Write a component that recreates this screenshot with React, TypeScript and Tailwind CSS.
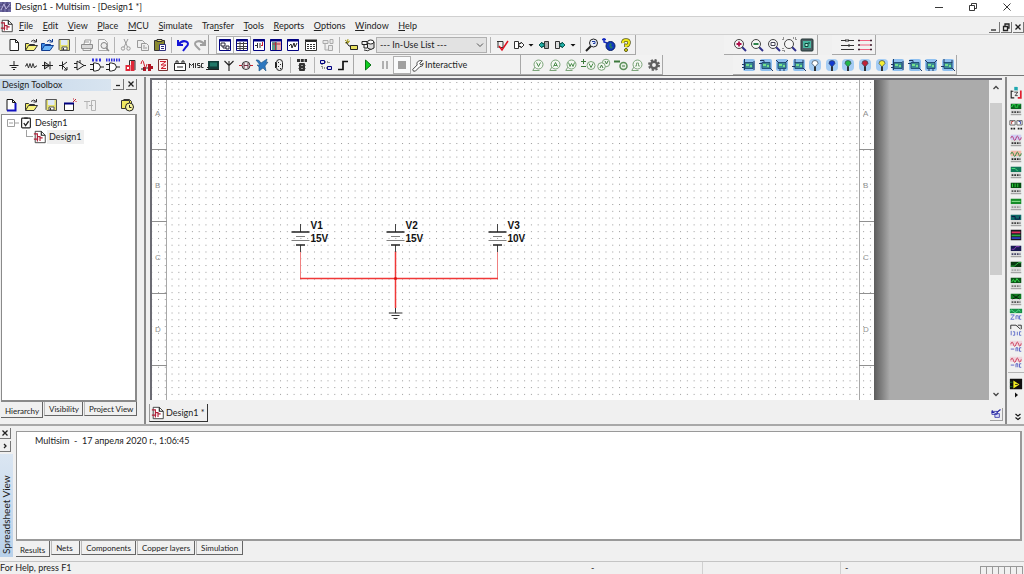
import { ReactNode } from 'react'

const NAVY = '#000080'

// 16x16 drawings, keyed by name
const docPage = (stroke: string) => (
  <>
    <path d="M4 2.500h5.500l3 3v8H4z" fill="#fff" stroke={stroke} />
    <path d="M9.500 2.500v3h3" fill="none" stroke={stroke} />
  </>
)

const folder = (back: string, front: string, line: string) => (
  <>
    <path d="M2.500 13V6.500h3l1 1h5V9" fill={back} stroke={line} />
    <path d="M2.500 13.500l3-5h9l-3.500 5z" fill={front} stroke={line} />
    <path d="M8 4.500q3-3 5 0M13.500 2v3h-3" fill="none" stroke={line} />
  </>
)

const floppy = (
  <>
    <path d="M3 2.500h10.500v11H4l-1-1z" fill="#e4e070" stroke="#555" />
    <path d="M5 3h6.500v5H5z" fill="#dfe9f6" />
    <path d="M6 10h5v3H6z" fill="#fff" stroke="#555" />
    <path d="M7 11h1v2H7z" fill="#333" />
  </>
)

const windowFrame = (inner: ReactNode) => (
  <>
    <path d="M2.500 2.500h11v11h-11z" fill="#fff" stroke={NAVY} />
    <path d="M2 3.500h12" stroke={NAVY} strokeWidth="2" />
    {inner}
  </>
)

const lens = (inner: ReactNode) => (
  <>
    <path d="M10 10l4 4" stroke="#30308c" strokeWidth="2" />
    <circle cx="7" cy="7" r="4.500" fill="#f6f6f6" stroke="#444" />
    {inner}
  </>
)

const probe = (inner: ReactNode) => (
  <>
    <path d="M2.500 13.500h7M3 13l2-3" fill="none" stroke="#7da57a" />
    <circle cx="8.500" cy="7.500" r="4.500" fill="#f3f7f2" stroke="#7da57a" />
    {inner}
  </>
)

const gate = (color: string) => (
  <>
    <path d="M1 7.500h3M1 12.500h3M11 10h4" stroke={color} />
    <path d="M4.500 6v8h2q4.500 0 5-4q-.5-4-5-4z" fill="#fff" stroke={color} />
  </>
)

const chip = (pins: string) => (
  <>
    <rect x="2" y="2" width="12" height="12" rx="2" fill="#8fc0f0" />
    <path d="M4 5.500h8v6H4z" fill="#3c8c94" stroke="#24507c" />
    <path d="M5 7h3v2H5zM9 8h2v2H9z" fill="#74e08c" />
    <path d={pins} stroke="#203860" fill="none" />
  </>
)

const pin = (color: string) => (
  <>
    <rect x="2" y="2" width="12" height="12" rx="4" fill="#a4ccf4" />
    <path d="M8 8v6" stroke="#222" strokeWidth="1.800" />
    <path d="M8 10L5 6.500q0-3 3-3t3 3z" fill={color} stroke="#345" strokeWidth=".7" />
  </>
)

const meter = (top: string, trace: string, wave: string, knobs: string) => (
  <>
    <path d="M2 2h12v12H2z" fill="#dcdcdc" />
    <path d="M2 2h12v6H2z" fill={top} />
    <path d={wave} fill="none" stroke={trace} />
    <path d="M3 11.500h2m1 0h2m1 0h2m1 0h1" stroke={knobs} strokeWidth="2" />
    <path d="M2 14.500h12" stroke="#888" />
  </>
)

const sine = 'M2 6q1.500-5 3 0t3 0 3 0 3-1'

const icons: Record<string, ReactNode> = {
  new: docPage('#222'),
  newBlue: (
    <>
      {docPage('#111')}
      <path d="M4 13.500h8.500V6" fill="none" stroke="#1010c0" strokeWidth="2" />
    </>
  ),
  open: folder('#f0ec60', '#f8f480', '#333'),
  openSample: folder('#3c8ce8', '#6ab4f8', '#103c90'),
  save: floppy,
  print: (
    <>
      <path d="M5 7l1-4h6l-1 4" fill="#fafafa" stroke="#999" />
      <path d="M2.500 7.500h11v4h-11z" fill="#d8d8d8" stroke="#8c8c8c" />
      <path d="M4 11.500h8v2H4zM6 5h4" fill="#eee" stroke="#999" />
    </>
  ),
  preview: (
    <>
      <path d="M3.500 2.500h6l3 3v8h-9z" fill="#f6f6f6" stroke="#aaa" />
      <circle cx="9" cy="8.500" r="3" fill="#eee" stroke="#888" />
      <path d="M11 11l3 3" stroke="#888" strokeWidth="1.500" />
    </>
  ),
  cut: (
    <>
      <path d="M6 2l3.500 8M10 2L6 10" stroke="#999" fill="none" />
      <circle cx="5" cy="11.500" r="1.700" fill="none" stroke="#999" />
      <circle cx="10.500" cy="11.500" r="1.700" fill="none" stroke="#999" />
    </>
  ),
  copy: (
    <>
      <path d="M2.500 3.500h5l2 2v5h-7z" fill="#eee" stroke="#999" />
      <path d="M6.500 6.500h5l2 2v5h-7zM8 9h2m-2 2h4" fill="#eee" stroke="#999" />
    </>
  ),
  paste: (
    <>
      <path d="M2.500 3.500h10v10h-10z" fill="#8a8a30" stroke="#333" />
      <path d="M5 2.500h5v2H5z" fill="#eee060" stroke="#333" />
      <path d="M7.500 7.500h6v6h-6zM9 9.500h3m-3 2h3" fill="#fff" stroke="#30307c" />
    </>
  ),
  undo: <path d="M3 3v5h5M3.500 7.500Q7 3 11 4.500T11 10l-3 4" fill="none" stroke="#1414d8" strokeWidth="2" />,
  redo: <path d="M13 3v5H8M12.500 7.500Q9 3 5 4.500T5 10l3 3" fill="none" stroke="#a0a0a0" strokeWidth="2" />,
  toolbox: windowFrame(<path d="M4 6h4v3H4zM9 9h3v3H9zM6 9v2h3" fill="none" stroke="#223" />),
  sheet: windowFrame(<path d="M3 6.500h10M3 9.500h10M6 5v8M9.500 5v8M3 11.500h10" stroke="#444" />),
  spice: windowFrame(
    <>
      <path d="M4 8.500h2M6.500 6v5M9 6v5" stroke="#333" />
      <path d="M10 8.500h2M11.500 5v4" stroke="#d02030" />
    </>
  ),
  grapher: (
    <>
      {windowFrame(<path d="M4 5h5v8H4z" fill="#5d9c8c" />)}
      <path d="M9 5h4v8H9z" fill="#f0b0b0" />
      <path d="M4.500 7h8m-5-2v8" stroke="#b03040" />
    </>
  ),
  analysis: windowFrame(<path d="M4 9l2-2 1 4 2-5 1 4 2-4" fill="none" stroke="#222" />),
  calc: (
    <>
      <path d="M2.500 4.500h11v9h-11z" fill="#fff" stroke="#333" />
      <path d="M2 3.500h12" stroke="#222" strokeWidth="2" />
      <path d="M4 7.500h8M4 9.500h8M4 11.500h8" stroke="#333" strokeDasharray="2 1" />
    </>
  ),
  tree: <path d="M3 3.500h5v3H3zM10 2.500h3v4h-3zM5 7v6h4M8.500 8.500h4v5h-4z" fill="#e8e8e8" stroke="#aaa" />,
  component: (
    <>
      <path d="M2 3l4 3M5 2l-1 5M2 6l5-2" stroke="#a09820" />
      <path d="M3 5l3 4h2" fill="none" stroke="#222" />
      <path d="M7.500 8.500h7v4h-7z" fill="#e8e060" stroke="#222" />
    </>
  ),
  database: (
    <>
      <path d="M2 4.500h5v3H2zM4 8v3h3" fill="none" stroke="#222" />
      <path d="M7.500 5v6q3.500 3 6.500 0V5" fill="#ddd" stroke="#222" />
      <ellipse cx="10.700" cy="5" rx="3.200" ry="2" fill="#fff" stroke="#222" />
      <path d="M4 13q4 2 7-1" stroke="#333" fill="none" />
    </>
  ),
  erc: (
    <>
      <path d="M3 4.500h6v6H5M4 4v7" fill="none" stroke="#333" />
      <path d="M5 9l3 4 6-9" fill="none" stroke="#e01020" strokeWidth="1.500" />
    </>
  ),
  transfer: <path d="M3.500 4.500h4v7h-4zM8 6.500h2V5l3 3-3 3V9.500H8z" fill="#fff" stroke="#333" />,
  backAnnotate: (
    <>
      <path d="M8.500 4.500h4v7h-4z" fill="#aaa" stroke="#333" />
      <path d="M8 6.500H6V5L3 8l3 3V9.500h2z" fill="#20b0a8" stroke="#0c5850" />
    </>
  ),
  forward: (
    <>
      <path d="M3.500 4.500h4v7h-4z" fill="#ddd" stroke="#333" />
      <path d="M8 6.500h2V5l3 3-3 3V9.500H8z" fill="#20b0a8" stroke="#0c5850" />
    </>
  ),
  find: (
    <>
      <path d="M7 9l-5 5" stroke="#222" strokeWidth="2" />
      <circle cx="9.500" cy="6" r="4" fill="#e8eef8" stroke="#222" />
      <path d="M8 4.500h3v2H9" fill="none" stroke="#1c3ca0" />
    </>
  ),
  globe: (
    <>
      <path d="M1 2.500h4M3 1v4l3 1" stroke="#1428c0" strokeWidth="1.500" fill="none" />
      <circle cx="9.500" cy="9" r="4.500" fill="#1038c0" stroke="#082060" />
      <path d="M9 6l2 1-1 2 2 1-2 2-2-3z" fill="#207868" />
    </>
  ),
  help: (
    <>
      <path d="M5 6q-.5-3 3-3t3 3-3 2.500V10" fill="none" stroke="#555510" strokeWidth="3.500" />
      <circle cx="8" cy="13" r="1.500" fill="#f0e818" stroke="#555510" />
      <path d="M5 6q-.5-3 3-3t3 3-3 2.500V10" fill="none" stroke="#f0e818" strokeWidth="2" />
    </>
  ),
  zoomIn: lens(<path d="M4.500 7h5M7 4.500v5" stroke="#b0104c" strokeWidth="1.800" />),
  zoomOut: lens(<path d="M4.500 7h5" stroke="#187838" strokeWidth="1.800" />),
  zoomArea: lens(<path d="M5 5.500h4v3H5z" fill="#fff" stroke="#445" />),
  zoomFit: (
    <>
      {lens(null)}
      <path d="M1 3V1h2m8 0h3v3M1 11v3h2" fill="none" stroke="#333" strokeDasharray="1 1" />
    </>
  ),
  fullScreen: (
    <>
      <rect x="2" y="2" width="12" height="12" rx="1" fill="#4c6064" stroke="#233" />
      <path d="M4 4h8v7H4z" fill="#48b8a0" />
      <path d="M6 6.500h3v3H6zM10 5v2" fill="#c0f0e0" stroke="#0c4438" />
    </>
  ),
  ladder: <path d="M1 3.500h5M8 3.500h6M1 8.500h13M1 12.500h13M6 2v3M8 2v3M9 7v3M2 3v1M12 3v1" stroke="#333" />,
  rungs: (
    <>
      <path d="M2 3.500h12M2 8h12M2 12.500h12" stroke="#f06080" />
      <path d="M1 3.500h2M13 3.500h2M1 8h2M13 8h2M1 12.500h2M13 12.500h2" stroke="#402030" strokeWidth="1.500" />
    </>
  ),
  ground: <path d="M8 4v4M3.500 8.500h9M5.500 10.500h5M7 12.500h2" stroke="#222" />,
  resistor: <path d="M2 9h1l1-2.500 1.500 4.500L7 6.500 8.500 11 10 6.500l1.500 4.500L13 9h1" fill="none" stroke="#333" />,
  diode: <path d="M3 8.500h11M5.500 5l5 3.500-5 3.500zM11 4.500v8" fill="#bbb" stroke="#222" />,
  transistor: <path d="M3 8.500h3M6.500 4.500v8M7 8l4-3M7 9l4 4M11 10v3H8" fill="none" stroke="#222" />,
  analog: <path d="M2 6.500h3M2 10.500h3M5 4v9l7-4.500zM12 8.500h2M8 3v3" fill="#eee" stroke="#222" />,
  ttl: (
    <>
      {gate('#222')}
      <path d="M3 3h10" stroke="#3030e0" strokeWidth="3" strokeDasharray="2 1.500" />
    </>
  ),
  cmos: (
    <>
      {gate('#222')}
      <path d="M1 3h14" stroke="#3030e0" strokeWidth="3" strokeDasharray="1.500 1" />
    </>
  ),
  misc: (
    <>
      <path d="M3.500 8h5v6h-5zM9 3h3.500v11H9z" fill="#e02838" />
      <path d="M5 10h2v2H5z" fill="#fff" />
      <path d="M7.500 8V3.500H13V13" fill="none" stroke="#333" />
    </>
  ),
  mixed: (
    <>
      <path d="M2 7q1.500-7 3 0t3 0" fill="none" stroke="#d02030" />
      <path d="M4 10h3v4H4zM9 7h3v7H9zM12 9h2v3h-2z" fill="#b01424" />
      <path d="M2 12h3M7 11h2" stroke="#222" />
    </>
  ),
  indicator: (
    <>
      <path d="M3.500 2.500h9v11h-9z" fill="#fff0f0" stroke="#733" />
      <path d="M5 4.500h6L6 8h5l-5 3.500h5" fill="none" stroke="#d02030" />
    </>
  ),
  power: <path d="M2.500 6.500h11v7h-11zM4 6V4h2v2M10 6V4h2v2M5 10h6" fill="#fff" stroke="#222" />,
  miscText: <path d="M1.500 6v5M1.500 6.500l2 2 2-2M5.500 6v5M7.500 6v5M12 6.500H9.500v2H12v2H9.500M15.500 6.500h-2v4h2" fill="none" stroke="#333" />,
  peripheral: (
    <>
      <path d="M3 4h11v8H3z" fill="#123c38" />
      <path d="M5 5.500h7v4H5z" fill="#207868" />
      <path d="M1 12.500h13M2 10.500h2" stroke="#222" />
    </>
  ),
  rf: <path d="M3.500 4L8 8.500 12.500 4M8 4v10" fill="none" stroke="#222" strokeWidth="1.100" />,
  motor: (
    <>
      <path d="M1 8.500h3M12 8.500h3" stroke="#d02030" />
      <circle cx="8" cy="8.500" r="4" fill="#eee" stroke="#333" />
      <path d="M6 6v5M10 6v5M6 8.500h4" stroke="#703040" />
    </>
  ),
  ni: <path d="M2 3q3-1 5 3l6-4-1 4 2-1-3 4 1 5-3-3-4 3v-4L3 8h3z" fill="#2d78c0" stroke="#1c5080" strokeWidth=".6" />,
  connector: (
    <>
      <rect x="5.500" y="2.500" width="6" height="11" rx="3" fill="#eee" stroke="#222" />
      <path d="M7.500 5v1m2 1v1m-2 1v1m2 1v1M4.500 5v6" stroke="#222" />
    </>
  ),
  mcu: (
    <>
      <path d="M3 3.500h10" stroke="#333" strokeWidth="3" strokeDasharray="3 .8" />
      <rect x="5" y="6" width="6" height="8" rx="1" fill="#333" />
      <path d="M7 8.500h2M7 11.500h2M4 8.500h1M4 11.500h1M11 8.500h1M11 11.500h1" stroke="#999" />
    </>
  ),
  hierarchy: (
    <>
      <path d="M2.500 3.500h4v3h-4zM9.500 9.500h4v3h-4z" fill="#dde" stroke={NAVY} />
      <path d="M7 5h4v2M4 7v4h5" stroke="#333" fill="none" strokeDasharray="1 1" />
    </>
  ),
  bus: <path d="M3 12.500h5v-8h5" fill="none" stroke="#111" strokeWidth="1.700" />,
  run: <path d="M5.500 3l5.500 5-5.500 5z" fill="#10d020" stroke="#087014" />,
  pause: <path d="M6 4v8M10 4v8" stroke="#a8a8a8" strokeWidth="1.800" />,
  stop: <path d="M4 4h8v8H4z" fill="#a0a0a0" />,
  wrench: <path d="M2 13l5-5q-1-4 3-5h3l-3 3 1 2 3-2q0 4-4 4l-5 5q-3 1-3-2z" fill="#fff" stroke="#333" />,
  probeV: probe(<path d="M6.500 5.500l2 4 2-4" fill="none" stroke="#4c8c4c" />),
  probeA: probe(<path d="M6.500 9.500l2-4 2 4M7 8.500h3" fill="none" stroke="#4c8c4c" />),
  probeW: probe(<path d="M5.500 5.500l1.500 4 1.500-3 1.500 3 1.500-4" fill="none" stroke="#4c8c4c" />),
  probeDiff: (
    <>
      <path d="M1 4.500h5M3.500 2v5M1 9.500h5" stroke="#3c783c" />
      <circle cx="11" cy="8.500" r="4" fill="#f3f7f2" stroke="#7da57a" />
      <path d="M9 6.500l2 4 2-4" fill="none" stroke="#4c8c4c" />
    </>
  ),
  probeRef: (
    <>
      <circle cx="10" cy="6" r="3.800" fill="#f3f7f2" stroke="#7da57a" />
      <circle cx="5.500" cy="9.500" r="3.800" fill="#f3f7f2" stroke="#7da57a" />
      <path d="M4 11l1.500-3L7 11M9 4l1.500 3L12 4" fill="none" stroke="#3c783c" />
    </>
  ),
  probeDigital: (
    <>
      <path d="M1 4.500h6" stroke="#3c783c" strokeWidth="2" />
      <circle cx="10.500" cy="9" r="3.500" fill="#e8f0e6" stroke="#5c905a" strokeWidth="1.500" />
      <path d="M9 9h3" stroke="#3c783c" />
    </>
  ),
  probePulse: probe(<path d="M6 9h1.500V6h2v3H11" fill="none" stroke="#7da57a" />),
  gear: (
    <>
      <circle cx="8" cy="8" r="5" fill="none" stroke="#606060" strokeWidth="2" strokeDasharray="2.200 1.727" />
      <circle cx="8" cy="8" r="3.200" fill="none" stroke="#606060" strokeWidth="2.500" />
    </>
  ),
  chipA: chip('M3.500 2v11M1 7.500h3M1 10.500h3M13 4v9'),
  chipB: chip('M2 3.500h4v2M12 11l3 3M1 6.500h3'),
  chipC: chip('M2 3l3 3M14 3l-3 3M6 12v2M10 12v2'),
  chipD: chip('M4 2v4M12 3v3M12 11l3 3M1 9.500h3'),
  pinWhite: pin('#fff'),
  pinBlue: pin('#1038d0'),
  pinGreen: pin('#20b848'),
  pinRed: pin('#c02038'),
  pinYellow: pin('#f4ee30'),
  closeDesign: (
    <>
      <path d="M2.500 6.500h9v7h-9z" fill="#fff" stroke="#222" />
      <path d="M2 6.500h10" stroke={NAVY} strokeWidth="2" />
      <path d="M11 5l3-3M11 2h1m2 3V4" stroke="#c02030" />
    </>
  ),
  rename: <path d="M2 4.500h6M5 5v7M9.500 3.500h4v10h-4zM7 8.500h4" stroke="#b4b4b4" fill="none" />,
  history: (
    <>
      <path d="M2.500 3.500h8v8h-8zM4.500 2.500h6l2 2v7" fill="#f0e860" stroke="#333" />
      <circle cx="10.500" cy="10" r="4" fill="#f8f4a0" stroke="#222" />
      <path d="M10.500 8v2.500h2" fill="none" stroke="#222" />
    </>
  ),
  schematic: (
    <>
      <path d="M2.500 1.500h7l4.500 4.500v8.500H2.500z" fill="#fff" stroke="#333" />
      <path d="M9.500 1.500V6H14" fill="none" stroke="#222" strokeWidth="1.300" />
      <path d="M1 4.500h4v3h3v5M1 10.500h5M5 4v9M8 9h3" fill="none" stroke="#b02038" strokeWidth="1.300" />
    </>
  ),
  design: (
    <>
      <rect x="3" y="2.500" width="10" height="11" rx="1" fill="#fff" stroke="#222" strokeWidth="1.300" />
      <path d="M6 2.500h4M5.500 8l2 3 3.500-5" fill="none" stroke="#222" strokeWidth="1.500" />
    </>
  ),
  multimeter: (
    <>
      <path d="M6 1h4v4H6z" fill="#20a8b0" />
      <path d="M2.500 5v8.500H6M2 6h3" fill="none" stroke="#222" strokeWidth="1.300" />
      <path d="M13.500 5v8.500H10" fill="none" stroke="#e02030" strokeWidth="2" />
      <path d="M6 7h4l-3 4h3" fill="none" stroke="#333" />
    </>
  ),
  funcGen: meter('#0c6420', '#28d848', 'M2 5h2V3h3v3h3V3h3', '#444'),
  watt: (
    <>
      <path d="M1 3h6v5H1zM9 3h6v5H9z" fill="#fff" stroke="#555" />
      <path d="M3 7V4h2" stroke="#b03030" fill="none" />
      <path d="M11 4h2v3" stroke="#2030a0" fill="none" />
      <path d="M2 12h2m1 0h2m3 0h2m1 0h2" stroke="#222" strokeWidth="2" />
    </>
  ),
  scope: meter('#d0ccf4', '#b03070', sine, '#333'),
  scope4: meter('#f4b8a8', '#208838', sine, '#222'),
  bode: meter('#107858', '#50e880', 'M3 4h4l3 3', '#333'),
  freq: meter('#044c10', '#30e040', 'M4 3v4M7 3v4m3-4v4', '#555'),
  wordGen: meter('#168c28', '#a0f0a0', 'M3 5h10', '#999'),
  logicConv: meter('#106868', '#101040', 'M3 4h4v3h5V4', '#444'),
  logicAn: (
    <>
      <path d="M2 2h12v12H2z" fill="#181820" />
      <path d="M3 5h10" stroke="#e03060" strokeWidth="2" />
      <path d="M3 8.500h10" stroke="#28b040" strokeWidth="2" />
      <path d="M3 11.500h10" stroke="#3040c0" strokeWidth="2" />
    </>
  ),
  iv: meter('#181850', '#9040c0', 'M3 6h3l2-3h4', '#446'),
  distortion: meter('#083810', '#38c850', 'M2 7h4l5-4h3', '#aaa'),
  spectrum: meter('#0c5418', '#38e850', 'M3 7l2-3 2 3 2-4 3 4', '#777'),
  network: meter('#107820', '#081808', 'M4 3l4 3-4 2m8-5l-4 3 4 2', '#555'),
  agilent: (
    <>
      <path d="M1 2h14v5H1z" fill="#189048" />
      <path d="M1 5q2-3 4 0t4 0 4 0" fill="none" stroke="#60e890" />
      <path d="M2 9h4l-4 5h4M8 14v-4h2.500v4m3.500-4h-2v4h2" fill="none" stroke="#5868c8" />
    </>
  ),
  labview: (
    <>
      <path d="M2 7V2.500h6l5 4.500M10 2.500h4V7" fill="none" stroke="#222" />
      <path d="M2.500 9v5m2-4h2v4h-2m5-4v4m4.500-4h-2v4h2" fill="none" stroke="#5868c8" />
    </>
  ),
  agScope: (
    <>
      <path d="M1 2h14v6H1z" fill="#f0d4dc" />
      <path d={sine} fill="none" stroke="#c83050" />
      <path d="M2 11.500h4M8 14v-4h2v4m4-4h-2v4h2" fill="none" stroke="#5058c0" />
    </>
  ),
  current: (
    <>
      <path d="M1 2h14v12H1z" fill="#101010" />
      <path d="M5 4l7 4.500L5 13z" fill="#f0ec20" />
      <path d="M7 8.500h3" stroke="#222" />
      <path d="M1 6h3M1 11h3" stroke="#187830" />
    </>
  ),
  spreadsheet: (
    <>
      <path d="M2.500 4.500h7v4h-7zM6.500 7.500h6v5h-6z" fill="#dce0f8" stroke="#2020a0" />
      <path d="M9 6l5-4M3 3v3h3" fill="none" stroke="#2020a0" strokeWidth="1.500" />
    </>
  ),
  dropdown: <path d="M5.500 7h5L8 9.500z" fill="#111" />,
}

const Icon = ({ name, className = 'size-4' }: { name: string; className?: string }) => (
  <svg viewBox="0 0 16 16" className={`${className} shrink-0`} aria-hidden="true">
    {icons[name]}
  </svg>
)

// items are spread evenly over the given width
const IconGroup = ({ width, names, pressed = [] }: { width: string; names: string[]; pressed?: string[] }) => (
  <div className={`flex items-center justify-between ${width}`}>
    {names.map((name, i) => (
      <button
        key={i}
        type="button"
        aria-label={name}
        className={`flex items-center justify-center h-4 ${name === 'dropdown' ? 'w-2' : 'w-4'} ${
          pressed.includes(name) ? 'bg-gray-50 outline outline-[#b0b0b0]' : ''
        }`}
      >
        <Icon name={name} />
      </button>
    ))}
  </div>
)

const Sep = () => <span className="w-px h-4 mx-[3px] bg-[#b4b4b4]" />

const Strip = ({ children, className = '' }: { children: ReactNode; className?: string }) => (
  <div className={`flex items-center h-5 border-r border-b border-[#a8a8a8] bg-[#f2f2f2] ${className}`}>
    {children}
  </div>
)

const menus = [
  ['', 'F', 'ile'],
  ['', 'E', 'dit'],
  ['', 'V', 'iew'],
  ['', 'P', 'lace'],
  ['', 'M', 'CU'],
  ['', 'S', 'imulate'],
  ['Tra', 'n', 'sfer'],
  ['', 'T', 'ools'],
  ['', 'R', 'eports'],
  ['', 'O', 'ptions'],
  ['', 'W', 'indow'],
  ['', 'H', 'elp'],
]

const instruments = [
  'multimeter', 'funcGen', 'watt', 'scope', 'scope4', 'bode', 'freq', 'wordGen', 'logicConv',
  'logicAn', 'iv', 'distortion', 'spectrum', 'network', 'agilent', 'labview', 'agScope', 'agScope',
]

const SmallButton = ({ label, d, className = '' }: { label: string; d: string; className?: string }) => (
  <button
    type="button"
    aria-label={label}
    className={`flex items-center justify-center size-[11px] border-r border-b border-[#777] bg-[#f0f0f0] ${className}`}
  >
    <svg viewBox="0 0 10 10" className="size-[10px]">
      <path d={d} fill="none" stroke="#222" strokeWidth="1.300" />
    </svg>
  </button>
)

const CROSS = 'M2.500 2.500l5 5M7.500 2.500l-5 5'

const TitleBar = () => (
  <header className="flex items-center h-4 pb-[2px] bg-white">
    <svg viewBox="0 0 12 12" className="size-3" aria-hidden="true">
      <path d="M0 1h11v10H0z" fill="#6c68a0" />
      <path d="M0 4h11M0 7h11M3 1v10M7 1v10" stroke="#443c74" />
      <path d="M1 9l3-6 2 5 4-5" stroke="#c0b8e0" fill="none" />
    </svg>
    <h1 className="ml-[3px] text-[9px] leading-3">Design1 - Multisim - [Design1 *]</h1>
    <div className="flex ml-auto">
      {[
        ['Minimize', 'M1 5.500h8'],
        ['Restore', 'M1.500 3.500h5v5h-5zM3.500 3.500v-2h5v5h-2'],
        ['Close', 'M1.500 1.500l7 7M8.500 1.500l-7 7'],
      ].map(([label, d]) => (
        <button key={label} type="button" aria-label={label} className="flex justify-center w-[34px]">
          <svg viewBox="0 0 10 10" className="size-[10px]">
            <path d={d} fill="none" stroke="#222" strokeWidth=".9" />
          </svg>
        </button>
      ))}
    </div>
  </header>
)

const MenuBar = () => (
  <nav className="flex items-center h-[19px] border-t border-b border-[#d0d0d0]">
    <Icon name="schematic" className="size-[14px]" />
    <div className="flex justify-between w-[398px] ml-[5px]">
      {menus.map(([pre, key, rest]) => (
        <button key={key + rest} type="button" className="text-[9px] leading-3">
          {pre}
          <u>{key}</u>
          {rest}
        </button>
      ))}
    </div>
    <div className="flex gap-px ml-auto mt-1">
      <SmallButton label="Minimize design" d="M2 8h5" />
      <SmallButton label="Restore design" d="M2.500 4.500h4v4h-4zM4 4V2h4v4H7" />
      <SmallButton label="Close design" d={CROSS} />
    </div>
  </nav>
)

const Toolbars = () => (
  <div className="border-b border-[#777]">
    <div className="flex">
      <Strip className="pl-[6px]">
        <IconGroup width="w-[66px]" names={['new', 'open', 'openSample', 'save']} />
        <Sep />
        <IconGroup width="w-8" names={['print', 'preview']} />
        <Sep />
        <IconGroup width="w-[50px]" names={['cut', 'copy', 'paste']} />
        <Sep />
        <IconGroup width="w-[33px]" names={['undo', 'redo']} />
      </Strip>
      <Strip className="pl-2">
        <IconGroup
          width="w-[84px]"
          names={['toolbox', 'sheet', 'spice', 'grapher', 'analysis']}
          pressed={['toolbox', 'sheet']}
        />
        <div className="w-[2px]" />
        <IconGroup width="w-[33px]" names={['calc', 'tree']} />
        <Sep />
        <IconGroup width="w-[33px]" names={['component', 'database']} />
        <select
          aria-label="In-Use List"
          className="w-[111px] h-4 pl-[3px] appearance-none border border-[#b0b0b0] bg-[#e2e2e2] text-[9px] leading-3"
        >
          <option>--- In-Use List ---</option>
        </select>
        <svg viewBox="0 0 8 8" className="size-2 -ml-[11px] mr-[3px] pointer-events-none" aria-hidden="true">
          <path d="M1 2.500l3 3 3-3" fill="none" stroke="#555" />
        </svg>
        <Sep />
        <IconGroup width="w-[83px]" names={['erc', 'transfer', 'dropdown', 'backAnnotate', 'forward', 'dropdown']} />
        <Sep />
        <IconGroup width="w-[50px]" names={['find', 'globe', 'help']} />
        <div className="w-px" />
      </Strip>
      <Strip className="ml-[88px] pl-2 pr-[2px]">
        <IconGroup width="w-[83px]" names={['zoomIn', 'zoomOut', 'zoomArea', 'zoomFit', 'fullScreen']} />
      </Strip>
      <Strip className="ml-[14px] pl-2 pr-[2px]">
        <IconGroup width="w-[33px]" names={['ladder', 'rungs']} />
      </Strip>
    </div>
    <div className="flex">
      <Strip className="pl-[6px]">
        <IconGroup
          width="w-[281px]"
          names={[
            'ground', 'resistor', 'diode', 'transistor', 'analog', 'ttl', 'cmos', 'misc', 'mixed',
            'indicator', 'power', 'miscText', 'peripheral', 'rf', 'motor', 'ni', 'connector',
          ]}
        />
        <Sep />
        <IconGroup width="w-4" names={['mcu']} />
        <div className="w-px" />
        <Sep />
        <IconGroup width="w-[33px]" names={['hierarchy', 'bus']} />
        <div className="w-[2px]" />
      </Strip>
      <Strip className="w-[167px] pl-[6px]">
        <IconGroup width="w-[50px]" names={['run', 'pause', 'stop']} pressed={['stop']} />
        <button type="button" className="flex items-center ml-px text-[9px] leading-3">
          <Icon name="wrench" className="size-[14px]" />
          Interactive
        </button>
      </Strip>
      <Strip className="pl-[9px]">
        <IconGroup
          width="w-[132px]"
          names={['probeV', 'probeA', 'probeW', 'probeDiff', 'probeRef', 'probeDigital', 'probePulse', 'gear']}
        />
      </Strip>
      <Strip className="ml-[70px] pl-2">
        <IconGroup
          width="w-[215px]"
          names={[
            'chipA', 'chipB', 'chipC', 'chipD', 'pinWhite', 'pinBlue', 'pinGreen', 'pinRed', 'pinYellow',
            'chipA', 'chipB', 'chipC', 'chipD',
          ]}
        />
      </Strip>
    </div>
  </div>
)

const Tabs = ({ items }: { items: string[] }) => (
  <div role="tablist" className="flex items-start gap-px">
    {items.map((item, i) => (
      <button
        key={item}
        type="button"
        role="tab"
        aria-selected={i === 0}
        className={`min-w-[29px] px-1 border-r border-b border-[#666] text-left text-[8px] leading-3 whitespace-nowrap ${
          i === 0 ? 'pt-[3px]' : 'pt-px border-l border-l-[#bbb]'
        }`}
      >
        {item}
      </button>
    ))}
  </div>
)

const DesignToolbox = () => (
  <aside className="flex flex-col w-[146px] shrink-0 pt-px pr-[7px] border-r-2 border-[#8a8a8a]">
    <div className="flex items-center gap-[2px] h-[13px]">
      <h2 className="flex-1 pl-[2px] bg-linear-to-r from-[#c6d8ea] to-[#d8e4f0] text-[9px] leading-3">Design Toolbox</h2>
      <SmallButton label="Auto hide" d="M3 6.500h4" />
      <SmallButton label="Close toolbox" d={CROSS} />
    </div>
    <div className="flex items-center h-[23px] pl-[3px] pr-[2px] pt-1">
      <IconGroup width="w-[95px]" names={['newBlue', 'open', 'save', 'closeDesign', 'rename']} />
      <div className="ml-auto">
        <IconGroup width="w-4" names={['history']} />
      </div>
    </div>
    <div className="flex-1 pt-px ml-px border border-r-2 border-b-2 border-[#8a8a8a] bg-white text-[9px] leading-[14px]">
      <div className="flex items-center pl-[5px]">
        <svg viewBox="0 0 12 8" className="w-3 h-2">
          <path d="M.5.500h7v7h-7zM2 4h4M8 4h4" fill="none" stroke="#a0a0a0" />
        </svg>
        <Icon name="design" className="size-[14px]" />
        <span className="ml-[2px]">Design1</span>
      </div>
      <div className="flex items-center pl-6">
        <span className="w-[7px] h-[7px] -mt-[7px] border-l border-b border-[#a0a0a0]" />
        <Icon name="schematic" className="size-[14px]" />
        <span className="px-[2px] bg-[#efefef]">Design1</span>
      </div>
    </div>
    <div className="h-[22px] pl-px">
      <Tabs items={['Hierarchy', 'Visibility', 'Project View']} />
    </div>
  </aside>
)

const sources = [
  { x: 148.5, name: 'V1', value: '15V' },
  { x: 243.5, name: 'V2', value: '15V' },
  { x: 345.5, name: 'V3', value: '10V' },
]

const rows = ['A', 'B', 'C', 'D']

const Schematic = () => (
  <svg className="w-[722px] h-full shrink-0 bg-white" role="img" aria-label="Schematic sheet">
    <defs>
      <pattern id="dots" x="6" y="2" width="6.780" height="6.780" patternUnits="userSpaceOnUse">
        <rect width="1" height="1" fill="#999" />
      </pattern>
    </defs>
    <rect width="100%" height="100%" fill="url(#dots)" />
    <path d="M14.500 0v1000M707.500 0v1000" stroke="#a8a8a8" />
    {rows.map((row, i) => (
      <g key={row} fill="#909090" fontSize="8" fontFamily="Liberation Sans, sans-serif">
        <path d={`M0 ${69.5 + i * 72}h15M707 ${69.5 + i * 72}h15`} stroke="#909090" />
        <text x="3" y={36 + i * 72}>{row}</text>
        <text x="711" y={36 + i * 72}>{row}</text>
      </g>
    ))}
    <path d="M148.500 171v28M345.500 171v28" stroke="#f08080" />
    <path d="M148 198.500h198M243.500 171v57" stroke="#f03838" strokeWidth="1.500" fill="none" />
    <circle cx="243.500" cy="198.500" r="1.500" fill="#e01010" />
    {sources.map(({ x, name, value }) => (
      <g key={name}>
        <path d={`M${x} 144v8M${x} 165v7`} stroke="#444" />
        <path d={`M${x - 9} 152h18M${x - 4.5} 165h9`} stroke="#222" strokeWidth="1.500" />
        <path d={`M${x - 4.5} 156.500h9M${x - 9} 160.500h18`} stroke="#808080" />
        <g fontSize="10" fontWeight="bold" fontFamily="Liberation Sans, sans-serif" fill="#111">
          <text x={x + 10} y="149">{name}</text>
          <text x={x + 10} y="162">{value}</text>
        </g>
      </g>
    ))}
    <path d="M243.500 228v5M237 233h13M239.500 235.500h8M241.500 238.500h4" stroke="#333" />
  </svg>
)

const Workspace = () => (
  <main className="flex flex-col flex-1 min-w-0 border-r-2 border-[#8a8a8a]">
    <div className="flex flex-1 min-h-0 mt-px ml-1 mr-[3px] overflow-hidden border-t-2 border-l-2 border-[#6c6c74] bg-[#ababab]">
      <div className="flex flex-1 min-w-0 overflow-hidden">
        <Schematic />
        <div className="w-4 bg-linear-to-r from-[#5c5c5c] to-[#ababab]" />
      </div>
      <div className="flex flex-col items-center w-[13px] bg-[#f0f0f0]">
        <svg viewBox="0 0 8 8" className="size-2 mt-1 mb-[11px]">
          <path d="M1.500 5L4 2.500 6.500 5" fill="none" stroke="#444" strokeWidth="1.300" />
        </svg>
        <div className="w-3 h-[172px] bg-[#cdcdcd]" />
        <svg viewBox="0 0 8 8" className="size-2 mt-auto mb-[2px]">
          <path d="M1.500 3L4 5.500 6.500 3" fill="none" stroke="#444" strokeWidth="1.300" />
        </svg>
      </div>
    </div>
    <div className="flex items-start justify-between h-6 pt-1 pl-[3px] pr-[2px]">
      <button
        type="button"
        className="flex items-center h-[18px] pl-px pr-[2px] border-r border-b border-l border-[#333] border-l-[#999] text-[9px] leading-3"
      >
        <Icon name="schematic" className="size-[14px] mr-px" />
        Design1 *
      </button>
      <button type="button" aria-label="Sheets" className="mt-1 border-r border-b border-[#a0a0a0]">
        <Icon name="spreadsheet" className="size-3" />
      </button>
    </div>
  </main>
)

const Instruments = () => (
  <div className="flex flex-col items-center w-[17px] shrink-0 pt-[9px]">
    <div className="flex flex-col justify-between h-[283px]">
      {instruments.map((name, i) => (
        <button key={i} type="button" aria-label={name}>
          <Icon name={name} className="size-[14px]" />
        </button>
      ))}
    </div>
    <span className="w-4 h-px mt-[3px] mb-1 bg-[#b4b4b4]" />
    <button type="button" aria-label="Current probe">
      <Icon name="current" className="size-[14px]" />
    </button>
    <svg viewBox="0 0 8 8" className="size-2">
      <path d="M3 1.500L6 4 3 6.500z" fill="#111" />
    </svg>
    <svg viewBox="0 0 8 8" className="size-2 mt-auto mb-[3px] ml-1">
      <path d="M1.500 1L4 3l2.500-2M1.500 4.500l2.500 2 2.500-2" fill="none" stroke="#111" strokeWidth="1.200" />
    </svg>
  </div>
)

const SpreadsheetView = () => (
  <section className="flex h-[137px] shrink-0 border-t-2 border-[#a8a8a8]">
    <div className="flex flex-col w-[13px] pt-[2px] pb-1">
      <SmallButton label="Close spreadsheet" d={CROSS} />
      <SmallButton label="Collapse spreadsheet" d="M4 3l2 2-2 2" className="mt-[2px]" />
      <h2 className="flex-1 pt-[3px] mt-[2px] bg-linear-to-b from-[#b9d1ea] to-[#dbe6f2] text-[10px] leading-[13px] [writing-mode:vertical-rl] rotate-180 whitespace-nowrap">
        Spreadsheet View
      </h2>
    </div>
    <div className="flex flex-col flex-1 pl-[3px] pr-[2px] pt-[5px]">
      <div className="h-[110px] pl-[18px] pt-[3px] border border-r-2 border-b-2 border-[#999] bg-white text-[9px] leading-3">
        Multisim &nbsp;- &nbsp;17 апреля 2020 г., 1:06:45
      </div>
      <Tabs items={['Results', 'Nets', 'Components', 'Copper layers', 'Simulation']} />
    </div>
  </section>
)

const StatusBar = () => (
  <footer className="flex h-[13px] shrink-0 border-t border-[#c4c4c4] text-[9px] leading-3">
    <span className="flex-1">For Help, press F1</span>
    <span className="w-[112px] border-r border-[#d0d0d0]">-</span>
    <span className="w-[138px] border-r border-[#d0d0d0]" />
    <span className="w-[139px] pl-1">-</span>
    <span className="flex mt-1 mr-px border-t border-l border-[#999]">
      {[0, 1, 2, 3, 4, 5, 6].map(i => (
        <i key={i} className="w-[6px] border-r border-[#999]" />
      ))}
    </span>
  </footer>
)

export default function App() {
  return (
    <div className="flex flex-col h-screen overflow-hidden bg-[#f0f0f0] text-[#222] font-[Lato,'Open_Sans','Noto_Sans',sans-serif]">
      <TitleBar />
      <MenuBar />
      <Toolbars />
      <div className="flex flex-1 min-h-0 pt-px">
        <DesignToolbox />
        <Workspace />
        <Instruments />
      </div>
      <SpreadsheetView />
      <StatusBar />
    </div>
  )
}
